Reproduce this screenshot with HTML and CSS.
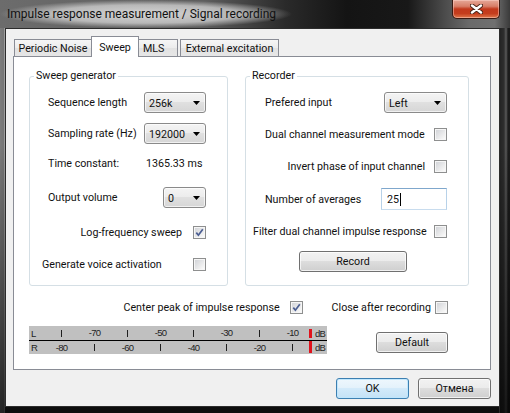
FILE: index.html
```html
<!DOCTYPE html>
<html>
<head>
<meta charset="utf-8">
<title>Impulse response measurement / Signal recording</title>
<link rel="stylesheet" href="styles.css">
</head>
<body>
<div class="window">
  <div class="titlebar">
    <span class="title">Impulse response measurement / Signal recording</span>
    <div class="close-btn">
      <svg width="13" height="10" viewBox="0 0 13 10"><path d="M2 1.5 L11 8.5 M11 1.5 L2 8.5" stroke="#4a2418" stroke-width="4.4" stroke-linecap="round"/><path d="M2 1.5 L11 8.5 M11 1.5 L2 8.5" stroke="#ffffff" stroke-width="2.4" stroke-linecap="round"/></svg>
    </div>
  </div>
  <div class="client">
    <div class="tabs">
      <div class="tab tab-pn">Periodic Noise</div>
      <div class="tab tab-sweep active">Sweep</div>
      <div class="tab tab-mls">MLS</div>
      <div class="tab tab-ext">External excitation</div>
    </div>
    <div class="panel">
      <div class="groups">
        <fieldset class="group group-left">
          <legend>Sweep generator</legend>
          <div class="group-body body-left">
            <div class="row">
              <span>Sequence length</span>
              <div class="combo w62"><span>256k</span><svg class="arrow" width="7" height="4" viewBox="0 0 7 4"><path d="M0 0H7L3.5 4Z" fill="#000"/></svg></div>
            </div>
            <div class="row mt10">
              <span>Sampling rate (Hz)</span>
              <div class="combo w62"><span>192000</span><svg class="arrow" width="7" height="4" viewBox="0 0 7 4"><path d="M0 0H7L3.5 4Z" fill="#000"/></svg></div>
            </div>
            <div class="row mt9 row-start">
              <span class="tc-label">Time constant:</span>
              <span>1365.33 ms</span>
            </div>
            <div class="row mt13">
              <span>Output volume</span>
              <div class="combo w43"><span>0</span><svg class="arrow" width="7" height="4" viewBox="0 0 7 4"><path d="M0 0H7L3.5 4Z" fill="#000"/></svg></div>
            </div>
            <div class="row mt14 row-end gap11">
              <span>Log-frequency sweep</span>
              <span class="cb"><svg width="9" height="9" viewBox="0 0 9 9"><path d="M1.3 4.6 L3.4 7.2 L7.8 1.2" fill="none" stroke="#4b5e92" stroke-width="1.7"/></svg></span>
            </div>
            <div class="row mt11 out6">
              <span>Generate voice activation</span>
              <span class="cb"></span>
            </div>
          </div>
        </fieldset>
        <fieldset class="group group-right">
          <legend>Recorder</legend>
          <div class="group-body body-right">
            <div class="row">
              <span>Prefered input</span>
              <div class="combo w63"><span>Left</span><svg class="arrow" width="7" height="4" viewBox="0 0 7 4"><path d="M0 0H7L3.5 4Z" fill="#000"/></svg></div>
            </div>
            <div class="row mt11">
              <span>Dual channel measurement mode</span>
              <span class="cb"></span>
            </div>
            <div class="row mt11 row-end gap9">
              <span>Invert phase of input channel</span>
              <span class="cb"></span>
            </div>
            <div class="row row-tall mt11">
              <span>Number of averages</span>
              <div class="textbox"><span>25</span><span class="caret"></span></div>
            </div>
            <div class="row mt11 out12">
              <span>Filter dual channel impulse response</span>
              <span class="cb"></span>
            </div>
            <div class="row mt9 row-start">
              <div class="btn btn-record">Record</div>
            </div>
          </div>
        </fieldset>
      </div>
      <div class="options">
        <span>Center peak of impulse response</span>
        <span class="cb cb-gap"><svg width="9" height="9" viewBox="0 0 9 9"><path d="M1.3 4.6 L3.4 7.2 L7.8 1.2" fill="none" stroke="#4b5e92" stroke-width="1.7"/></svg></span>
        <span class="close-label">Close after recording</span>
        <span class="cb"></span>
      </div>
      <div class="meter-line">
        <div class="meter">
          <div class="meter-row meter-top">
            <span class="ch">L</span>
            <span class="cell"><i class="tick"></i></span>
            <span class="cell">-70</span>
            <span class="cell"><i class="tick"></i></span>
            <span class="cell">-50</span>
            <span class="cell"><i class="tick"></i></span>
            <span class="cell">-30</span>
            <span class="cell"><i class="tick"></i></span>
            <span class="cell">-10</span>
            <span class="peak"></span>
            <span class="db">dB</span>
          </div>
          <div class="meter-row meter-bottom">
            <span class="ch">R</span>
            <span class="cell">-80</span>
            <span class="cell"><i class="tick"></i></span>
            <span class="cell">-60</span>
            <span class="cell"><i class="tick"></i></span>
            <span class="cell">-40</span>
            <span class="cell"><i class="tick"></i></span>
            <span class="cell">-20</span>
            <span class="cell"><i class="tick"></i></span>
            <span class="peak"></span>
            <span class="db">dB</span>
          </div>
        </div>
        <div class="btn btn-default">Default</div>
      </div>
    </div>
    <div class="dialog-buttons">
      <div class="btn btn-ok">OK</div>
      <div class="btn btn-cancel">Отмена</div>
    </div>
  </div>
</div>
</body>
</html>
```
FILE: styles.css
```css
* { box-sizing: border-box; }
html, body { margin: 0; padding: 0; }
body {
  width: 510px;
  height: 413px;
  overflow: hidden;
  background: #151515;
  font-family: Roboto, "Noto Sans", "Liberation Sans", sans-serif;
  font-size: 10.7px;
  color: #111;
}
.window {
  width: 510px;
  height: 413px;
  display: flex;
  flex-direction: column;
  background:
    linear-gradient(to bottom, rgba(0,0,0,0) 35%, rgba(0,0,0,0.7) 100%),
    linear-gradient(to right, #7c7c7c 0, #747474 4px, #9c9c9c 4px, #9c9c9c 5px, #2a2a2a 5px, #2a2a2a 499px, #8c8c8c 499px, #8c8c8c 500px, #242424 500px, #2e2e2e 504px, #5a5a5a 506px, #1c1c1c 508px);
}
.titlebar {
  height: 28px;
  flex: none;
  display: flex;
  justify-content: space-between;
  align-items: flex-start;
  background: linear-gradient(to right, #6c6c6c 0%, #5e5e5e 40%, #2a2a2a 56%, #141414 68%, #181818 80%, #4a4a4a 87%, #6a6a6a 92%, #707070 97%, #3a3a3a 100%);
}
.title {
  display: block;
  height: 28px;
  line-height: 28px;
  padding: 0 16px 0 7px;
  font-size: 12px;
  color: #111;
  white-space: nowrap;
  background: radial-gradient(closest-side, rgba(222,222,222,0.92) 0%, rgba(205,205,205,0.8) 65%, rgba(150,150,150,0) 100%);
}
.close-btn {
  width: 48px;
  height: 19px;
  margin-right: 10px;
  border: 1px solid #3a1a12;
  border-top: none;
  border-radius: 0 0 5px 5px;
  background: linear-gradient(to bottom, #e6a898 0%, #d77e68 35%, #c2391c 50%, #c53d1d 75%, #e0774a 100%);
  box-shadow: inset 0 0 0 1px rgba(255,220,210,0.45);
  display: flex;
  align-items: center;
  justify-content: center;
}
.client {
  margin-left: 5px;
  width: 495px;
  height: 379px;
  flex: none;
  border: 1px solid #2c2c2c;
  background: #f0f0f0;
  display: flex;
  flex-direction: column;
}
.tabs {
  height: 21px;
  margin-top: 7px;
  padding-left: 8px;
  display: flex;
  align-items: flex-end;
  position: relative;
  z-index: 1;
}
.tab {
  height: 17px;
  margin-bottom: 1px;
  border: 1px solid #898c95;
  border-bottom: none;
  background: linear-gradient(to bottom, #f6f6f6 0%, #ececec 50%, #e2e2e2 51%, #e6e6e6 100%);
  display: flex;
  align-items: center;
  justify-content: center;
  white-space: nowrap;
}
.tab.active {
  height: 21px;
  margin-bottom: 0;
  background: #ffffff;
}
.tab-pn { width: 78px; }
.tab-sweep { width: 48px; margin-left: -1px; }
.tab-mls { width: 40px; margin-left: -1px; justify-content: flex-start; padding-left: 4px; }
.tab-ext { width: 99px; margin-left: 2px; }
.panel {
  margin-top: -1px;
  margin-left: 7px;
  width: 478px;
  height: 314px;
  flex: none;
  border: 1px solid #898c95;
  background: #ffffff;
  display: flex;
  flex-direction: column;
}
.groups {
  display: flex;
  gap: 17px;
  padding-left: 15px;
  margin-top: 12px;
}
.group {
  margin: 0;
  padding: 0;
  min-width: 0;
  height: 217px;
  border: 1px solid #d5dfe5;
  border-radius: 3px;
}
.group-left { width: 199px; }
.group-right { width: 224px; }
legend {
  margin-left: 4px;
  padding: 0 2px;
  line-height: 14px;
  font-size: 10.7px;
}
.group-body {
  display: flex;
  flex-direction: column;
  padding-top: 9px;
}
.body-left { padding-left: 18px; padding-right: 21px; }
.body-right { padding-left: 19px; padding-right: 21px; }
.row {
  height: 21px;
  display: flex;
  align-items: center;
  justify-content: space-between;
  white-space: nowrap;
}
.row-tall { height: 22px; }
.row-start { justify-content: flex-start; }
.row-end { justify-content: flex-end; }
.gap11 { gap: 11px; }
.gap9 { gap: 9px; }
.mt9 { margin-top: 9px; }
.mt10 { margin-top: 10px; }
.mt11 { margin-top: 11px; }
.mt13 { margin-top: 13px; }
.mt14 { margin-top: 14px; }
.out6 { margin-left: -6px; }
.out12 { margin-left: -12px; }
.tc-label { width: 98px; }
.combo {
  height: 21px;
  border: 1px solid #8a8a8a;
  border-radius: 3px;
  background: linear-gradient(to bottom, #f4f4f4 0%, #ececec 49%, #e0e0e0 50%, #d6d6d6 100%);
  box-shadow: inset 0 0 0 1px rgba(255,255,255,0.65);
  display: flex;
  align-items: center;
  justify-content: space-between;
  padding: 1px 5px 0 4px;
}
.combo .arrow { display: block; }
.w62 { width: 62px; }
.w63 { width: 63px; }
.w43 { width: 43px; }
.cb {
  width: 13px;
  height: 13px;
  flex: none;
  border: 1px solid #8e8f8f;
  padding: 1px;
  background: linear-gradient(135deg, #d3d5d9 0%, #f2f2f2 80%, #fbfbfb 100%) content-box, #f6f6f6;
  display: flex;
  align-items: center;
  justify-content: center;
}
.cb svg { display: block; }
.textbox {
  width: 66px;
  height: 22px;
  border: 1px solid;
  border-color: #7fa7cc #b8d2e9 #c8dcee #b8d2e9;
  background: #ffffff;
  display: flex;
  align-items: center;
  padding: 0 0 0 5px;
}
.caret {
  width: 1px;
  height: 13px;
  background: #000;
  margin-left: 1px;
}
.btn {
  height: 21px;
  border: 1px solid #707070;
  border-radius: 3px;
  background: linear-gradient(to bottom, #f2f2f2 0%, #ebebeb 49%, #dddddd 50%, #cfcfcf 100%);
  box-shadow: inset 0 0 0 1px rgba(255,255,255,0.7);
  display: flex;
  align-items: center;
  justify-content: center;
  white-space: nowrap;
  flex: none;
}
.btn-record { width: 108px; margin-left: 34px; }
.options {
  height: 21px;
  margin-top: 11px;
  padding-right: 42px;
  display: flex;
  align-items: center;
  justify-content: flex-end;
  white-space: nowrap;
}
.cb-gap { margin-left: 10px; }
.close-label { margin-left: 29px; margin-right: 4px; }
.meter-line {
  margin-top: 8px;
  padding: 0 42px 0 15px;
  display: flex;
  justify-content: space-between;
  align-items: flex-start;
}
.meter {
  width: 298px;
  height: 28px;
  background: #c0c0c0;
  display: flex;
  flex-direction: column;
  font-family: "Liberation Sans", Arial, sans-serif;
  font-size: 9.5px;
  letter-spacing: -0.8px;
  color: #1e1e1e;
}
.meter-row {
  display: grid;
  grid-template-columns: 16px repeat(8, 33px) 3px 1fr;
  align-items: center;
}
.meter-top { height: 15px; border-bottom: 1px solid #000; }
.meter-bottom { height: 13px; }
.ch { padding-left: 2px; }
.cell { text-align: center; line-height: 10px; }
.tick {
  display: inline-block;
  width: 1px;
  height: 7px;
  background: #1e1e1e;
  vertical-align: middle;
}
.peak {
  align-self: stretch;
  background: #e0121c;
}
.meter-top .peak { margin: 3px 0 2px; }
.meter-bottom .peak { margin: 0 0 1px; }
.db { text-align: right; padding-right: 2px; }
.btn-default { width: 72px; margin-top: 6px; }
.dialog-buttons {
  margin-top: 8px;
  padding-right: 8px;
  display: flex;
  justify-content: flex-end;
  gap: 9px;
}
.btn-ok {
  width: 73px;
  border-color: #3c7fb1;
  background: linear-gradient(to bottom, #eef7fd 0%, #e3f1fb 49%, #d3eafa 50%, #c4e2f6 100%);
  box-shadow: inset 0 0 0 1px rgba(190,230,253,0.9);
}
.btn-cancel { width: 73px; }
```
